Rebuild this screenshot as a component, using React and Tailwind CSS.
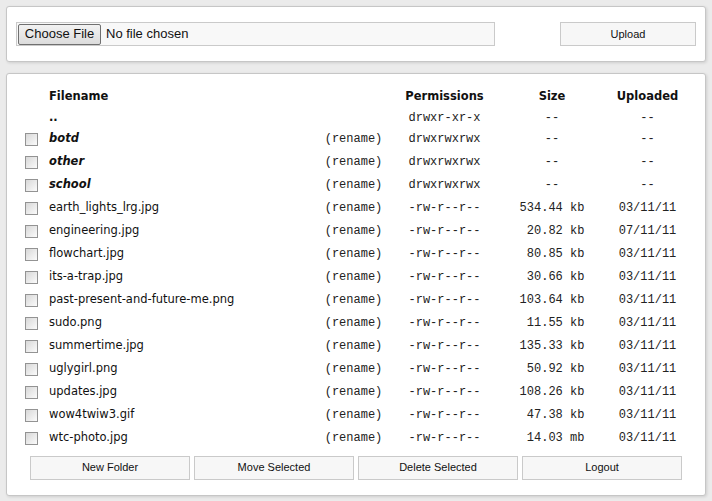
import React from 'react'

const files = [
  { name: 'botd', dir: true, perms: 'drwxrwxrwx', size: '--', date: '--' },
  { name: 'other', dir: true, perms: 'drwxrwxrwx', size: '--', date: '--' },
  { name: 'school', dir: true, perms: 'drwxrwxrwx', size: '--', date: '--' },
  { name: 'earth_lights_lrg.jpg', perms: '-rw-r--r--', size: '534.44 kb', date: '03/11/11' },
  { name: 'engineering.jpg', perms: '-rw-r--r--', size: '20.82 kb', date: '07/11/11' },
  { name: 'flowchart.jpg', perms: '-rw-r--r--', size: '80.85 kb', date: '03/11/11' },
  { name: 'its-a-trap.jpg', perms: '-rw-r--r--', size: '30.66 kb', date: '03/11/11' },
  { name: 'past-present-and-future-me.png', perms: '-rw-r--r--', size: '103.64 kb', date: '03/11/11' },
  { name: 'sudo.png', perms: '-rw-r--r--', size: '11.55 kb', date: '03/11/11' },
  { name: 'summertime.jpg', perms: '-rw-r--r--', size: '135.33 kb', date: '03/11/11' },
  { name: 'uglygirl.png', perms: '-rw-r--r--', size: '50.92 kb', date: '03/11/11' },
  { name: 'updates.jpg', perms: '-rw-r--r--', size: '108.26 kb', date: '03/11/11' },
  { name: 'wow4twiw3.gif', perms: '-rw-r--r--', size: '47.38 kb', date: '03/11/11' },
  { name: 'wtc-photo.jpg', perms: '-rw-r--r--', size: '14.03 mb', date: '03/11/11' },
]

const cols = 'grid grid-cols-[42px_271px_67px_115px_100px_91px] items-center'
const mono = "font-['Liberation_Mono',monospace] text-[12px] text-[#222]"

function Box() {
  return (
    <span className="block w-[13px] h-[13px] ml-[18px] border border-[#939393] bg-gradient-to-br from-[#d8d8d8] to-[#fbfbfb]" />
  )
}

function Btn({ children, className = '' }) {
  return (
    <button className={`h-[24px] border border-[#cacaca] bg-[#f7f7f7] text-[11px] text-[#111] font-['Liberation_Sans',Arial,sans-serif] ${className}`}>
      {children}
    </button>
  )
}

export default function App() {
  return (
    <div className="min-h-[501px] bg-[#ebebeb] pt-[6px] px-[6px] font-['DejaVu_Sans',Verdana,sans-serif] text-[#111]">
      <div className="h-[56px] bg-white border border-[#c6c6c6] rounded-[3px] shadow-[1px_1px_3px_rgba(0,0,0,0.12)] flex items-center pl-[9px] pr-[9px]">
        <div className="w-[479px] h-[24px] border border-[#cacaca] bg-[#f8f8f8] flex items-center pl-[1px]">
          <span className="h-[21px] w-[83px] flex items-center justify-center border border-[#707070] rounded-[2px] bg-gradient-to-b from-[#f2f2f2] to-[#dcdcdc] text-[13px] text-[#111] font-['Liberation_Sans',Arial,sans-serif]">
            Choose File
          </span>
          <span className="ml-[5px] text-[13px] text-[#111] font-['Liberation_Sans',Arial,sans-serif]">No file chosen</span>
        </div>
        <Btn className="ml-auto w-[136px]">Upload</Btn>
      </div>

      <div className="mt-[11px] h-[423px] bg-white border border-[#c6c6c6] rounded-[3px] shadow-[1px_1px_3px_rgba(0,0,0,0.12)] pt-[12.5px]">
        <div className={`${cols} h-[21px] text-[11.5px] font-bold`}>
          <span />
          <span>Filename</span>
          <span />
          <span className="text-center">Permissions</span>
          <span className="text-center">Size</span>
          <span className="text-center">Uploaded</span>
        </div>
        <div className={`${cols} h-[20px]`}>
          <span />
          <span className="text-[11.5px] font-bold">..</span>
          <span />
          <span className={`${mono} text-center`}>drwxr-xr-x</span>
          <span className={`${mono} text-center`}>--</span>
          <span className={`${mono} text-center`}>--</span>
        </div>
        {files.map((f) => (
          <div key={f.name} className={`${cols} h-[23px]`}>
            <Box />
            <span className={`text-[11.5px] ${f.dir ? 'font-bold italic' : ''}`}>{f.name}</span>
            <span className={`${mono} text-center`}>(rename)</span>
            <span className={`${mono} text-center`}>{f.perms}</span>
            <span className={`${mono} text-center whitespace-pre`}>{f.size === '--' ? '--' : f.size.padStart(9, ' ')}</span>
            <span className={`${mono} text-center`}>{f.date}</span>
          </div>
        ))}
        <div className="flex gap-[4px] pl-[23px] mt-[6px]">
          <Btn className="w-[160px]">New Folder</Btn>
          <Btn className="w-[160px]">Move Selected</Btn>
          <Btn className="w-[160px]">Delete Selected</Btn>
          <Btn className="w-[160px]">Logout</Btn>
        </div>
      </div>
    </div>
  )
}
